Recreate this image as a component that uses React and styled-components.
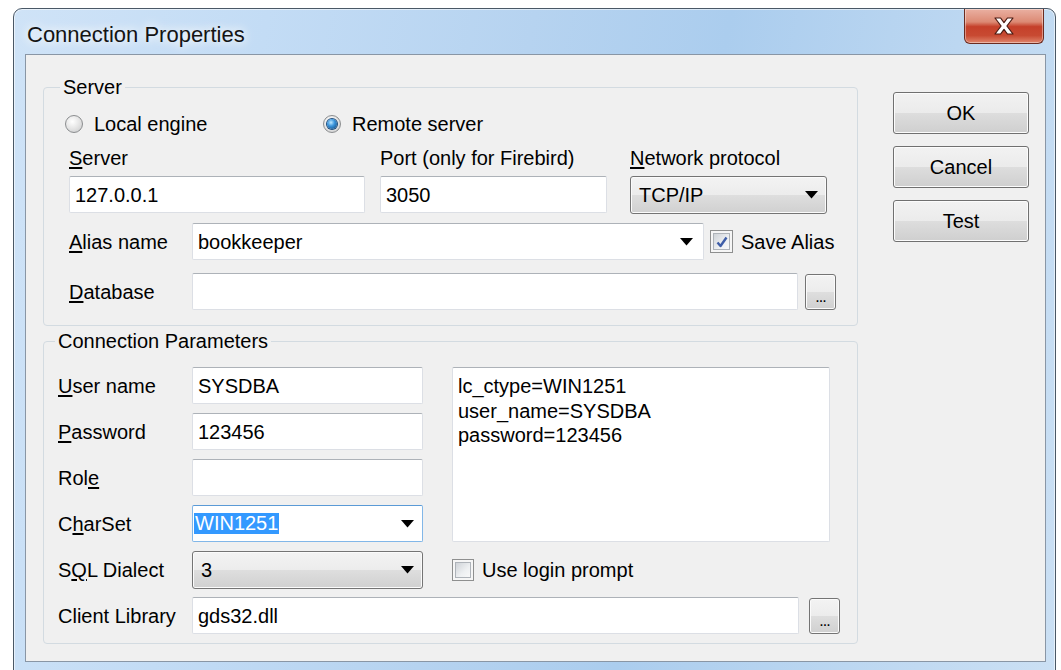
import React from 'react';
import styled, { createGlobalStyle } from 'styled-components';

const GlobalStyle = createGlobalStyle`
  html, body {
    margin: 0;
    padding: 0;
    background: #ffffff;
    overflow: hidden;
  }
  body {
    font-family: 'Liberation Sans', Arial, sans-serif;
    font-size: 20px;
    color: #000000;
  }
  * {
    box-sizing: border-box;
  }
`;

const Page = styled.div`
  width: 1061px;
  height: 670px;
  padding: 8px 0 0 13px;
  overflow: hidden;
`;

const Window = styled.div`
  width: 1043px;
  display: flex;
  flex-direction: column;
  padding: 0 9px 10px 11px;
  border: 1px solid #4a5866;
  border-radius: 9px 9px 0 0;
  background: linear-gradient(100deg, #cfe3f7 0%, #c3dcf5 22%, #b6d3f0 45%, #abcdee 62%, #bcd7f1 82%, #cbe0f4 100%);
  box-shadow: inset 0 0 0 1px rgba(255, 255, 255, 0.55);
`;

const TitleBar = styled.div`
  height: 45px;
  display: flex;
  justify-content: space-between;
  align-items: flex-start;
`;

const Title = styled.div`
  margin: 15px 0 0 2px;
  font-size: 22px;
  line-height: 22px;
  color: #141414;
  text-shadow: 0 0 8px #ffffff, 0 0 14px rgba(255, 255, 255, 0.9);
`;

const CloseButton = styled.div`
  width: 80px;
  height: 35px;
  margin-right: 2px;
  display: flex;
  align-items: center;
  justify-content: center;
  border: 1px solid #6b2b20;
  border-top: none;
  border-radius: 0 0 6px 6px;
  background: linear-gradient(#eab0a2 0%, #dc8a74 38%, #c5402a 52%, #c84a32 78%, #e0866d 100%);
  box-shadow: inset 0 0 0 1px rgba(255, 255, 255, 0.4);
`;

const Client = styled.div`
  height: 608px;
  display: flex;
  align-items: flex-start;
  padding: 22px 16px 0 17px;
  background: #f0f0f0;
  border: 1px solid #8996a5;
`;

const Groups = styled.div`
  width: 815px;
  display: flex;
  flex-direction: column;
  gap: 5px;
`;

const Group = styled.fieldset`
  margin: 0;
  min-width: 0;
  padding: ${p => p.$pad};
  border: 1px solid #d3dbe1;
  border-radius: 4px;
`;

const Caption = styled.legend`
  margin-left: ${p => p.$shift}px;
  padding: 0 3px;
  font-size: 20px;
  line-height: 20px;
`;

const Key = styled.span`
  text-decoration: underline;
  text-underline-offset: 2px;
`;

const RadioRow = styled.div`
  height: 24px;
  margin-left: -4px;
  display: flex;
  align-items: center;
`;

const RadioOption = styled.label`
  width: ${p => (p.$w ? `${p.$w}px` : 'auto')};
  display: flex;
  align-items: center;
  gap: 11px;
  line-height: 20px;
`;

const RadioDot = styled.span`
  width: 18px;
  height: 18px;
  flex: none;
  display: grid;
  place-items: center;
  border: 1px solid #8b8d8f;
  border-radius: 50%;
  background: radial-gradient(circle at 40% 35%, #ffffff 0%, #e2e2e2 55%, #c4c6c8 100%);

  &::after {
    content: '';
    width: 10px;
    height: 10px;
    border-radius: 50%;
    background: ${p => (p.$on ? 'radial-gradient(circle at 40% 35%, #bfe8ff 0%, #3b95dc 40%, #0c3f73 100%)' : 'transparent')};
    box-shadow: ${p => (p.$on ? '0 0 0 1px #1c4d7f' : 'none')};
  }
`;

const ServerGrid = styled.div`
  margin-top: 12px;
  display: grid;
  grid-template-columns: 311px 250px 197px;
  grid-template-rows: 20px 37px;
  row-gap: 8px;
`;

const FieldLabel = styled.div`
  width: ${p => (p.$w ? `${p.$w}px` : 'auto')};
  flex: none;
  line-height: 20px;
  white-space: nowrap;
`;

const ParamLabel = styled(FieldLabel)`
  grid-column: 1;
`;

const TextBox = styled.div`
  width: ${p => (p.$w ? `${p.$w}px` : '100%')};
  height: ${p => p.$h || 37}px;
  flex: none;
  display: flex;
  align-items: center;
  padding: 0 5px;
  background: #ffffff;
  border: 1px solid #dcdfe5;
  border-top-color: #adb2b8;
  border-radius: 2px;
  line-height: 20px;
  white-space: nowrap;
`;

const EditCombo = styled(TextBox)`
  justify-content: space-between;
  padding-right: ${p => p.$arrowPad || 8}px;
  border-color: ${p => (p.$focus ? '#82b7e8' : '#dcdfe5')};
  border-top-color: ${p => (p.$focus ? '#5a9ad6' : '#adb2b8')};
`;

const ButtonCombo = styled.div`
  width: ${p => (p.$w ? `${p.$w}px` : '100%')};
  height: 38px;
  display: flex;
  align-items: center;
  justify-content: space-between;
  padding: 0 8px 0 8px;
  border: 1px solid #747474;
  border-radius: 3px;
  background: linear-gradient(#f3f3f3 0%, #ececec 50%, #dedede 51%, #d0d0d0 100%);
  box-shadow: inset 0 0 0 1px #fbfbfb;
  line-height: 20px;
`;

const Selected = styled.span`
  margin-left: -4px;
  padding: 0 1px;
  background: #3399ff;
  color: #ffffff;
  line-height: 21px;
`;

const Row = styled.div`
  height: 37px;
  margin-top: ${p => p.$top}px;
  display: flex;
  align-items: center;
`;

const CheckOption = styled.label`
  margin-left: ${p => p.$left || 0}px;
  display: flex;
  align-items: center;
  gap: ${p => p.$gap}px;
  line-height: 20px;
  white-space: nowrap;
`;

const CheckBox = styled.span`
  width: ${p => p.$size}px;
  height: ${p => p.$size}px;
  flex: none;
  display: grid;
  place-items: center;
  padding: 2px;
  border: 1px solid #8e8f8f;
  background: #f6f6f6;

  & > span {
    width: 100%;
    height: 100%;
    display: grid;
    place-items: center;
    border: 1px solid #aeb3b9;
    background: linear-gradient(135deg, #cfd3d8 0%, #eef0f2 60%, #f8f8f8 100%);
  }
`;

const Ellipsis = styled.div`
  width: 31px;
  height: 36px;
  flex: none;
  margin-left: ${p => p.$left || 0}px;
  display: flex;
  align-items: flex-end;
  justify-content: center;
  padding-bottom: 7px;
  border: 1px solid #747474;
  border-radius: 3px;
  background: linear-gradient(#f3f3f3 0%, #ececec 50%, #dedede 51%, #d0d0d0 100%);
  box-shadow: inset 0 0 0 1px #fbfbfb;
  font-size: 16px;
  line-height: 10px;
  letter-spacing: -1px;
`;

const ParamGrid = styled.div`
  display: grid;
  grid-template-columns: 134px 231px 29px 388px;
  grid-auto-rows: 37px;
  row-gap: 9px;
  align-items: center;
`;

const InputCell = styled.div`
  grid-column: 2;
`;

const Memo = styled.div`
  grid-column: 4;
  grid-row: 1 / span 4;
  align-self: stretch;
  width: 378px;
  padding: 6px 5px;
  background: #ffffff;
  border: 1px solid #dcdfe5;
  border-top-color: #adb2b8;
  border-radius: 2px;
  line-height: 24.5px;
`;

const Wide = styled.div`
  grid-column: 2 / span 3;
  display: flex;
  align-items: center;
  gap: 10px;
`;

const Side = styled.div`
  grid-column: 4;
`;

const Buttons = styled.div`
  width: 136px;
  margin: 15px 0 0 35px;
  display: flex;
  flex-direction: column;
  gap: 12px;
`;

const PushButton = styled.div`
  height: 42px;
  display: flex;
  align-items: center;
  justify-content: center;
  border: 1px solid #707070;
  border-radius: 3px;
  background: linear-gradient(#f2f2f2 0%, #ebebeb 50%, #dddddd 51%, #cfcfcf 100%);
  box-shadow: inset 0 0 0 1px #fcfcfc;
  line-height: 20px;
`;

const DropArrow = () => (
  <svg width="13" height="8" viewBox="0 0 13 8">
    <path d="M0 0H13L6.5 7.5Z" fill="#000000" />
  </svg>
);

const Tick = () => (
  <svg width="14" height="14" viewBox="0 0 14 14">
    <path d="M2.5 7.5L5.5 11L11.5 2.5" fill="none" stroke="#3f5ea8" strokeWidth="2.4" strokeLinejoin="round" />
  </svg>
);

const CloseGlyph = () => (
  <svg width="22" height="18" viewBox="0 0 22 18">
    <path
      d="M2 1H7.6L11 5.6L14.4 1H20L13.9 9L20 17H14.4L11 12.4L7.6 17H2L8.1 9Z"
      fill="#ffffff"
      stroke="#4a1a12"
      strokeWidth="1.2"
      strokeLinejoin="round"
    />
  </svg>
);

const ConnectionProperties = () => {
  return (
    <Page>
      <GlobalStyle />
      <Window>
        <TitleBar>
          <Title>Connection Properties</Title>
          <CloseButton>
            <CloseGlyph />
          </CloseButton>
        </TitleBar>
        <Client>
          <Groups>
            <Group $pad="15px 15px 15px 25px">
              <Caption $shift={-9}>Server</Caption>
              <RadioRow>
                <RadioOption $w={258}>
                  <RadioDot />
                  Local engine
                </RadioOption>
                <RadioOption>
                  <RadioDot $on />
                  Remote server
                </RadioOption>
              </RadioRow>
              <ServerGrid>
                <FieldLabel><Key>S</Key>erver</FieldLabel>
                <FieldLabel>Port (only for Firebird)</FieldLabel>
                <FieldLabel><Key>N</Key>etwork protocol</FieldLabel>
                <TextBox $w={296}>127.0.0.1</TextBox>
                <TextBox $w={227}>3050</TextBox>
                <ButtonCombo $w={197}>
                  TCP/IP
                  <DropArrow />
                </ButtonCombo>
              </ServerGrid>
              <Row $top={10}>
                <FieldLabel $w={123}><Key>A</Key>lias name</FieldLabel>
                <EditCombo $w={512} $arrowPad={10}>
                  bookkeeper
                  <DropArrow />
                </EditCombo>
                <CheckOption $gap={8} $left={6}>
                  <CheckBox $size={23}>
                    <span><Tick /></span>
                  </CheckBox>
                  Save Alias
                </CheckOption>
              </Row>
              <Row $top={13}>
                <FieldLabel $w={123}><Key>D</Key>atabase</FieldLabel>
                <TextBox $w={606} />
                <Ellipsis $left={7}>...</Ellipsis>
              </Row>
            </Group>

            <Group $pad="16px 15px 9px 14px">
              <Caption $shift={-3}>Connection Parameters</Caption>
              <ParamGrid>
                <Memo>
                  lc_ctype=WIN1251<br />
                  user_name=SYSDBA<br />
                  password=123456
                </Memo>

                <ParamLabel><Key>U</Key>ser name</ParamLabel>
                <InputCell>
                  <TextBox $w={231}>SYSDBA</TextBox>
                </InputCell>

                <ParamLabel><Key>P</Key>assword</ParamLabel>
                <InputCell>
                  <TextBox $w={231}>123456</TextBox>
                </InputCell>

                <ParamLabel>Rol<Key>e</Key></ParamLabel>
                <InputCell>
                  <TextBox $w={231} />
                </InputCell>

                <ParamLabel>C<Key>h</Key>arSet</ParamLabel>
                <InputCell>
                  <EditCombo $w={231} $focus $arrowPad={8}>
                    <Selected>WIN1251</Selected>
                    <DropArrow />
                  </EditCombo>
                </InputCell>

                <ParamLabel>S<Key>Q</Key>L Dialect</ParamLabel>
                <InputCell>
                  <ButtonCombo $w={231}>
                    3
                    <DropArrow />
                  </ButtonCombo>
                </InputCell>
                <Side>
                  <CheckOption $gap={8}>
                    <CheckBox $size={22}>
                      <span />
                    </CheckBox>
                    Use login prompt
                  </CheckOption>
                </Side>

                <ParamLabel>Client Library</ParamLabel>
                <Wide>
                  <TextBox $w={607}>gds32.dll</TextBox>
                  <Ellipsis>...</Ellipsis>
                </Wide>
              </ParamGrid>
            </Group>
          </Groups>

          <Buttons>
            <PushButton>OK</PushButton>
            <PushButton>Cancel</PushButton>
            <PushButton>Test</PushButton>
          </Buttons>
        </Client>
      </Window>
    </Page>
  );
};

export default ConnectionProperties;
